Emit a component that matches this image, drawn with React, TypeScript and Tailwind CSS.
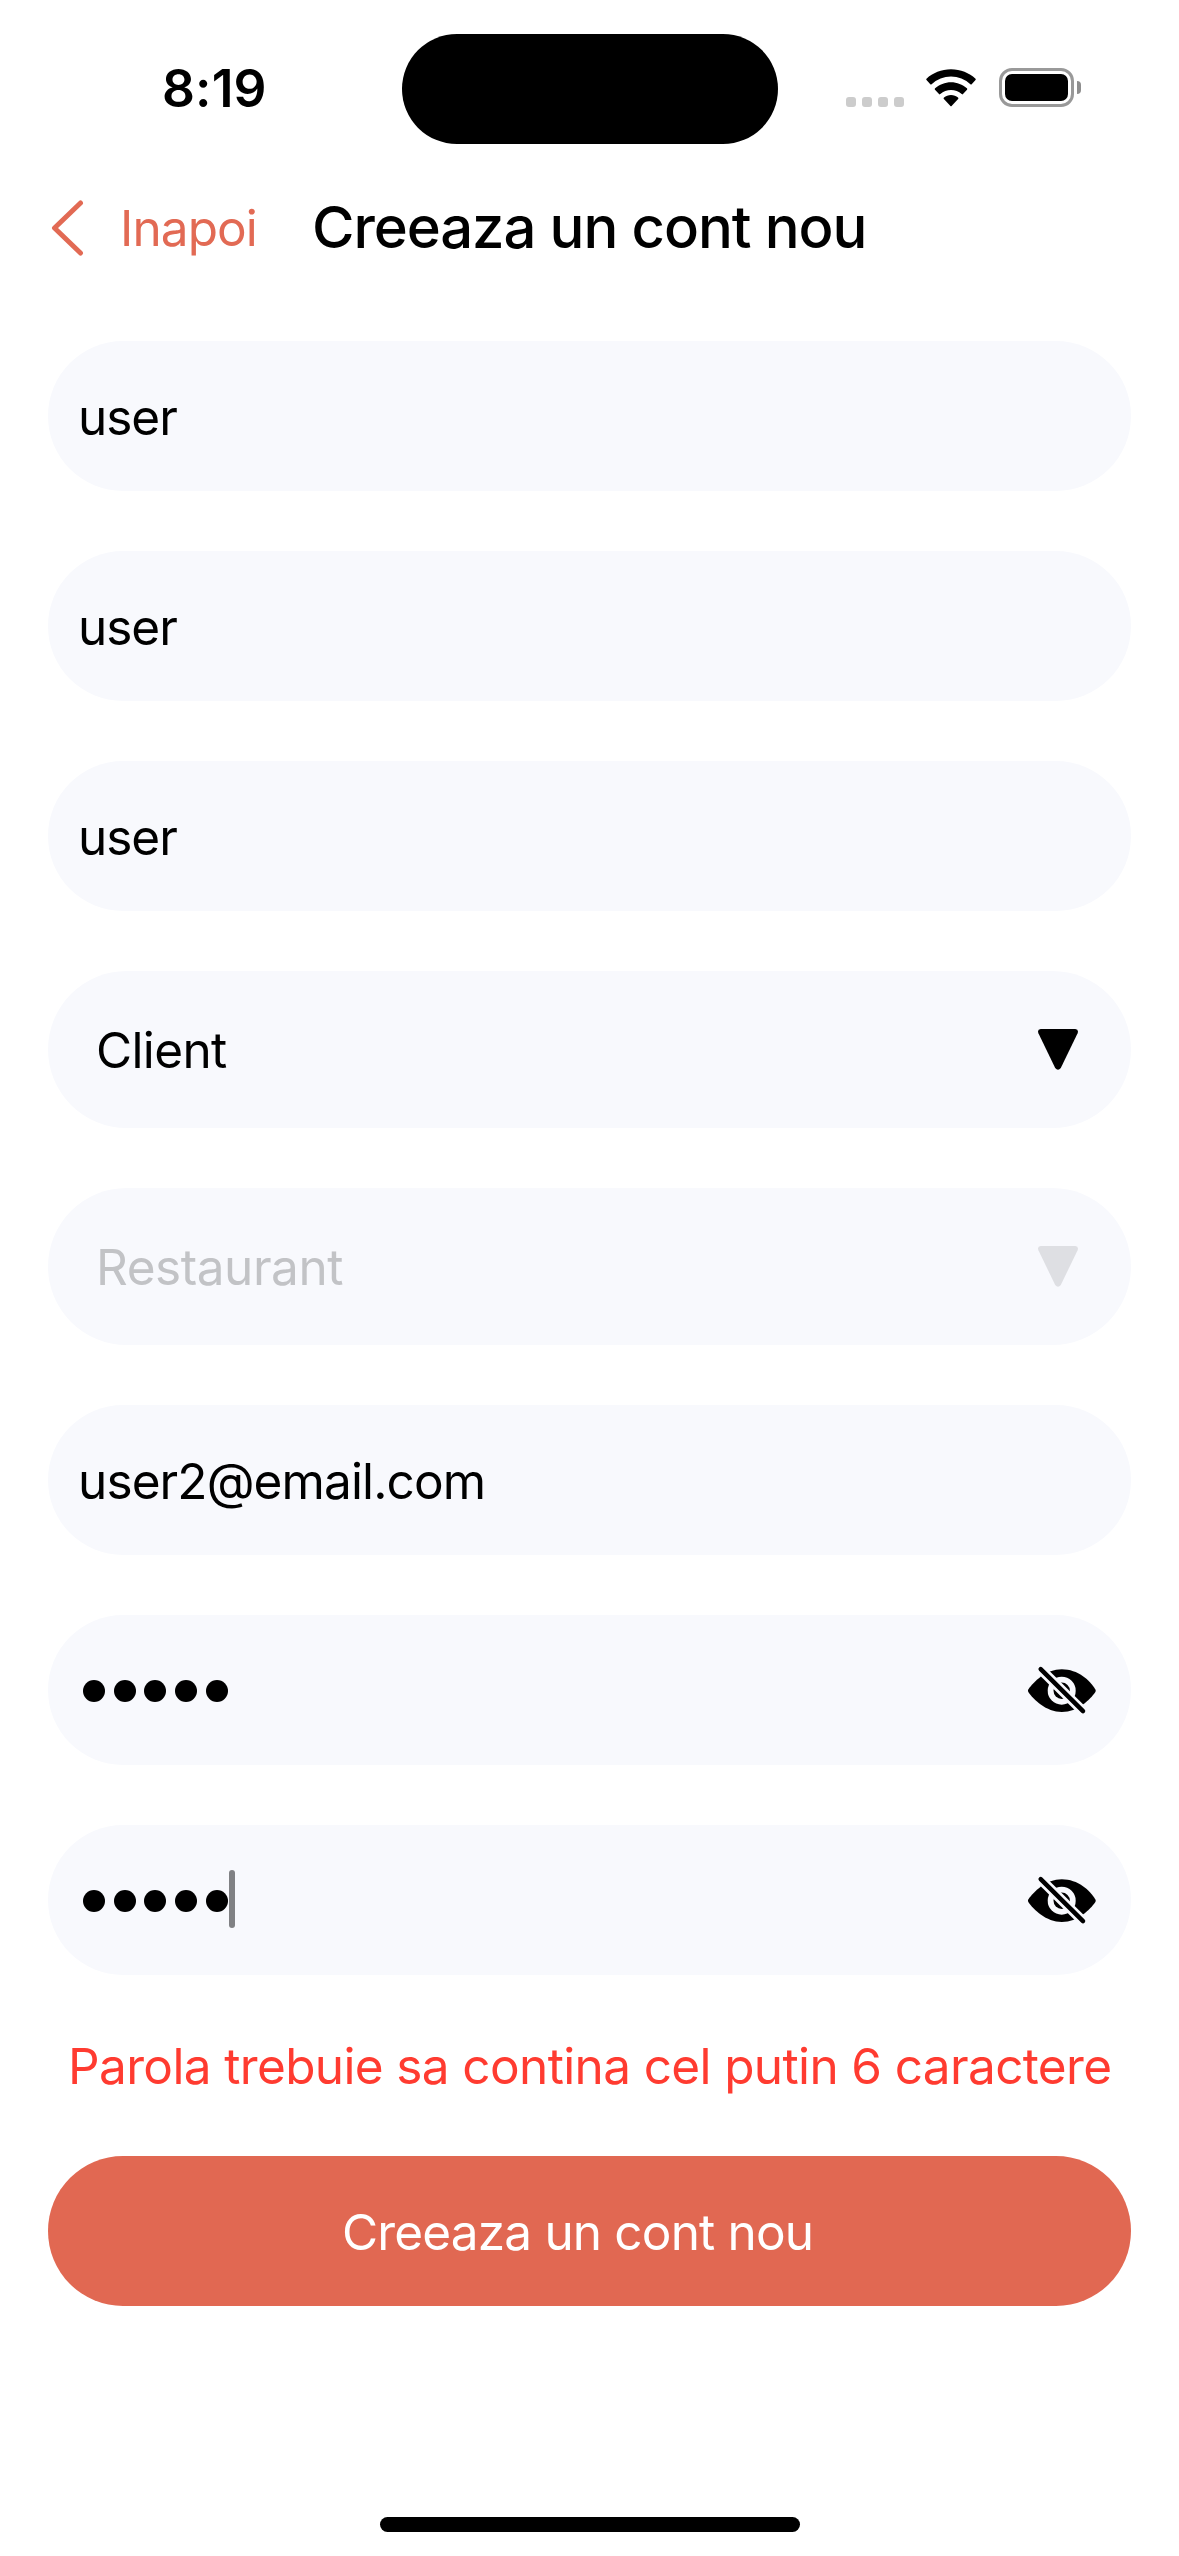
import React from "react";

function StatusIcons() {
  return (
    <div className="flex h-[39px] items-center">
      <div className="mt-[28px] flex gap-[6px]">
        {[0, 1, 2, 3].map((i) => (
          <span key={i} className="size-[10px] rounded-[3px] bg-[#cccccc]" />
        ))}
      </div>
      <svg className="ml-[22px] h-[38px] w-[50px]" viewBox="0 0 50 38">
        <path d="M25 .3C34.600 .3 43.200 3.900 49.500 9.700Q50.100 10.300 49.500 11L45.700 15.200Q45.100 15.800 44.400 15.200A28.500 28.500 0 0 0 5.600 15.200Q4.900 15.800 4.300 15.200L.5 11Q-.1 10.300 .5 9.700C6.800 3.900 15.400 .3 25 .3Z" />
        <path d="M25 13.200C31 13.200 36.600 15.500 40.900 19.300Q41.700 20 41 20.800L37 25.100Q36.400 25.700 35.700 25.100A16.300 16.300 0 0 0 14.300 25.100Q13.600 25.700 13 25.100L9 20.800Q8.300 20 9.100 19.300C13.400 15.500 19 13.200 25 13.200Z" />
        <path d="M25 25.900C27.700 25.900 30.100 26.800 32 28.400Q32.900 29.200 32.100 30.100L25.600 36.900Q25 37.500 24.400 36.900L17.900 30.100Q17.100 29.200 18 28.400C19.900 26.800 22.300 25.900 25 25.900Z" />
      </svg>
      <div className="ml-[23px] h-[39px] w-[75px] rounded-[13px] border-[3px] border-[#999999] p-[3px]">
        <div className="h-full w-full rounded-[7px] bg-black" />
      </div>
      <span className="ml-[3px] h-[13px] w-[4px] rounded-r-full bg-[#8e8e8e]" />
    </div>
  );
}

function EyeOff() {
  return (
    <svg className="mr-[21px] h-[80px] w-[100px]" viewBox="0 0 100 80">
      <path d="M18.300 42Q17.600 40.700 18.300 39.400C24 31.500 36 19.300 51.800 19.300C68 19.300 80 30.500 85.400 39.400Q86.100 40.700 85.400 42C80 49.500 68 62 51.800 62C36 62 23.500 49.500 18.300 42Z" />
      <circle cx="51.700" cy="40.700" r="14" fill="#f8f9fd" />
      <circle cx="51.700" cy="40.700" r="8.200" />
      <path d="M30.700 19.200L73 61.200" stroke="#f8f9fd" strokeWidth="10" />
      <path d="M30.700 19.200L73 61.200" stroke="#000" strokeWidth="4.500" strokeLinecap="round" />
    </svg>
  );
}

function TextRow({ value, className }: { value: string; className: string }) {
  return (
    <div className="flex h-[150px] items-center rounded-full bg-[#f8f9fd] pt-[2px] pl-[30px]">
      <span className={className}>{value}</span>
    </div>
  );
}

function SelectRow({ value, className, arrow }: { value: string; className: string; arrow: string }) {
  return (
    <div className="flex h-[157px] items-center justify-between rounded-full bg-[#f8f9fd] pr-[53px] pl-[48px]">
      <span className={className}>{value}</span>
      <svg className={`h-[41px] w-[40px] ${arrow}`} viewBox="0 0 40 41" fill="currentColor">
        <path d="M2.700 0H37.300Q41 .5 39.600 4.200L22.800 39Q20 42.600 17.200 39L.4 4.200Q-1 .5 2.700 0Z" />
      </svg>
    </div>
  );
}

function PasswordRow({ focused = false }: { focused?: boolean }) {
  return (
    <div className="flex h-[150px] items-center rounded-full bg-[#f8f9fd] pl-[35px]">
      <div className="mt-[2px] flex gap-[8.700px]">
        {[0, 1, 2, 3, 4].map((i) => (
          <span key={i} className="size-[22px] rounded-full bg-black" />
        ))}
      </div>
      {focused && <span className="ml-[1px] -mt-[2px] h-[58px] w-[6px] rounded-full bg-[#808184]" />}
      <div className="ml-auto">
        <EyeOff />
      </div>
    </div>
  );
}

export default function App() {
  return (
    <div className="flex h-[2556px] w-[1179px] flex-col bg-white font-[Inter,sans-serif] text-[49.5px] leading-[60px] whitespace-nowrap text-black">
      <header className="flex h-[177px] pt-[33px]">
        <div className="w-[402px] pt-[25px] pl-[162px] text-[51.500px] font-semibold tracking-[0.15px]">8:19</div>
        <div className="mt-[0.5px] h-[110.5px] w-[375.5px] rounded-full bg-black" />
        <div className="pt-[35px] pl-[68.5px]">
          <StatusIcons />
        </div>
      </header>

      <nav className="flex h-[102px] items-center pl-[50px]">
        <svg className="h-[56px] w-[36px]" viewBox="0 0 36 56" fill="none" stroke="#e26a54" strokeWidth="5" strokeLinecap="round" strokeLinejoin="round">
          <path d="M30.500 3L4.500 28L30.500 53" />
        </svg>
        <span className="ml-[34px] w-[192px] tracking-[-0.9px] text-[#e26a54]">Inapoi</span>
        <h1 className="-mt-[3px] text-[58px] font-medium tracking-[-1.09px]">Creeaza un cont nou</h1>
      </nav>

      <main className="mt-[62px] flex flex-col gap-[60px] px-[48px]">
        <TextRow value="user" className="tracking-[-1.03px]" />
        <TextRow value="user" className="tracking-[-1.03px]" />
        <TextRow value="user" className="tracking-[-1.03px]" />
        <SelectRow value="Client" className="tracking-[-0.65px]" arrow="text-black" />
        <SelectRow value="Restaurant" className="tracking-[-0.45px] text-[#c2c3c6]" arrow="text-[#dedfe3]" />
        <TextRow value="user2@email.com" className="tracking-[-0.88px]" />
        <PasswordRow />
        <PasswordRow focused />
      </main>

      <p className="mt-[61px] pl-[68px] tracking-[-0.63px] text-[#ff3b30]">Parola trebuie sa contina cel putin 6 caractere</p>

      <button className="mx-[48px] mt-[60px] flex h-[150px] shrink-0 items-center rounded-full bg-[#e16852] pt-px pl-[294px] tracking-[-0.83px] text-white">
        Creeaza un cont nou
      </button>

      <div className="mx-auto mt-auto mb-[24px] h-[15px] w-[420px] rounded-full bg-black" />
    </div>
  );
}
